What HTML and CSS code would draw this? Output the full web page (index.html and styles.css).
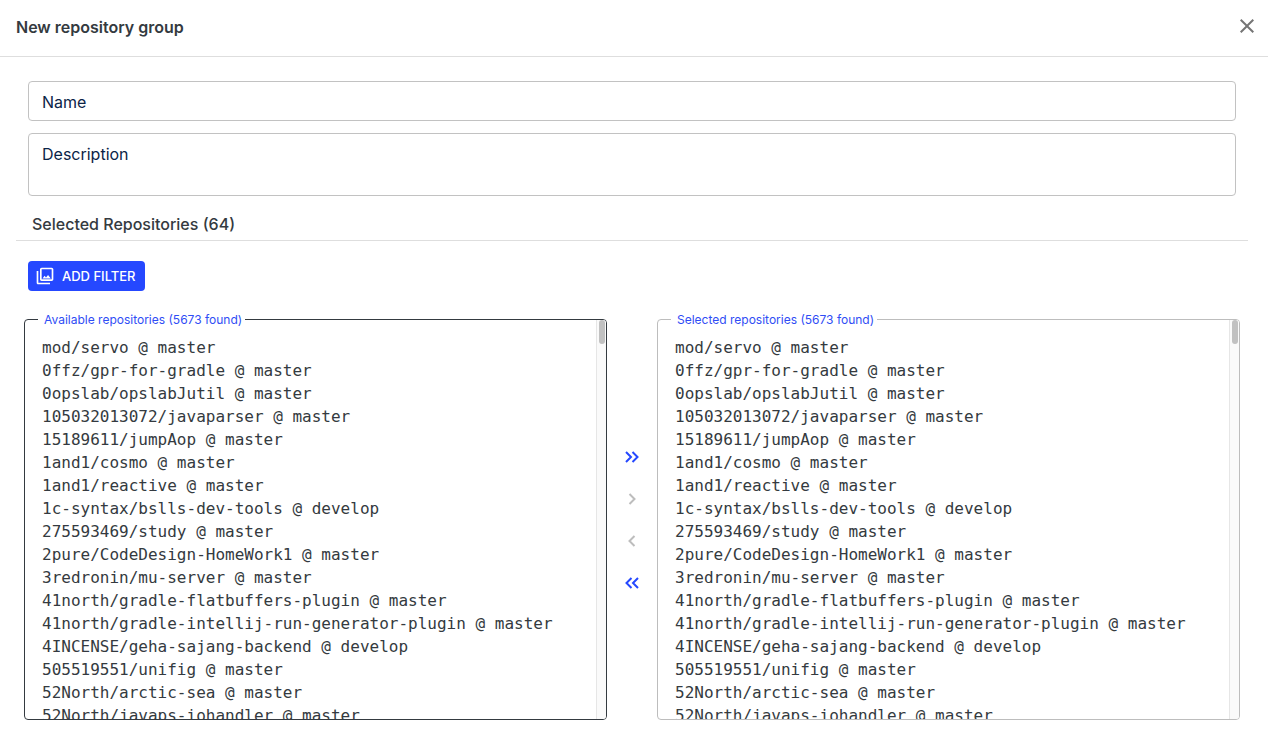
FILE: index.html
```html
<!DOCTYPE html>
<html lang="en">
<head>
<meta charset="utf-8">
<meta name="viewport" content="width=device-width, initial-scale=1">
<title>New repository group</title>
<link rel="stylesheet" href="styles.css">
</head>
<body>
<header class="header">
  <h1 class="title">New repository group</h1>
  <button class="close" type="button" aria-label="Close">
    <svg width="24" height="24" viewBox="0 0 24 24" fill="currentColor"><path d="M19 6.41 17.59 5 12 10.59 6.41 5 5 6.41 10.59 12 5 17.59 6.41 19 12 13.41 17.59 19 19 17.59 13.41 12z"/></svg>
  </button>
</header>
<main>
  <form>
    <div class="fields">
      <div class="field">
        <label class="field-label" for="name">Name</label>
        <input class="field-control" id="name" type="text">
      </div>
      <div class="field">
        <label class="field-label" for="description">Description</label>
        <textarea class="field-control field-control-multiline" id="description" rows="2"></textarea>
      </div>
    </div>
    <h2 class="section-title">Selected Repositories (64)</h2>
    <div class="toolbar">
      <button class="add-filter" type="button">
        <svg width="20" height="20" viewBox="0 0 24 24" fill="currentColor"><path d="M20 4v12H8V4h12m0-2H8c-1.1 0-2 .9-2 2v12c0 1.100.9 2 2 2h12c1.100 0 2-.9 2-2V4c0-1.100-.9-2-2-2zm-8.500 9.670 1.690 2.260 2.480-3.100L19 15H9zM2 6v14c0 1.100.9 2 2 2h14v-2H4V6H2z"/></svg>
        <span>ADD FILTER</span>
      </button>
    </div>
    <div class="transfer">
      <div class="pane pane-active">
        <label class="pane-label" for="available">Available repositories (5673 found)</label>
        <textarea class="pane-list" id="available" rows="16" wrap="off" spellcheck="false" readonly>mod/servo @ master
0ffz/gpr-for-gradle @ master
0opslab/opslabJutil @ master
105032013072/javaparser @ master
15189611/jumpAop @ master
1and1/cosmo @ master
1and1/reactive @ master
1c-syntax/bslls-dev-tools @ develop
275593469/study @ master
2pure/CodeDesign-HomeWork1 @ master
3redronin/mu-server @ master
41north/gradle-flatbuffers-plugin @ master
41north/gradle-intellij-run-generator-plugin @ master
4INCENSE/geha-sajang-backend @ develop
505519551/unifig @ master
52North/arctic-sea @ master
52North/javaps-iohandler @ master</textarea>
        <div class="track"><div class="thumb"></div></div>
      </div>
      <div class="actions">
        <button class="move" type="button" aria-label="Move all right"><svg width="20" height="20" viewBox="0 0 20 20"><path d="m4 5 5 5-5 5M10.500 5l5 5-5 5"/></svg></button>
        <button class="move" type="button" aria-label="Move selected right" disabled><svg width="20" height="20" viewBox="0 0 20 20"><path d="m7.500 5 5 5-5 5"/></svg></button>
        <button class="move" type="button" aria-label="Move selected left" disabled><svg width="20" height="20" viewBox="0 0 20 20"><path d="m12.500 5-5 5 5 5"/></svg></button>
        <button class="move" type="button" aria-label="Move all left"><svg width="20" height="20" viewBox="0 0 20 20"><path d="m9.500 5-5 5 5 5M16 5l-5 5 5 5"/></svg></button>
      </div>
      <div class="pane">
        <label class="pane-label" for="selected">Selected repositories (5673 found)</label>
        <textarea class="pane-list" id="selected" rows="16" wrap="off" spellcheck="false" readonly>mod/servo @ master
0ffz/gpr-for-gradle @ master
0opslab/opslabJutil @ master
105032013072/javaparser @ master
15189611/jumpAop @ master
1and1/cosmo @ master
1and1/reactive @ master
1c-syntax/bslls-dev-tools @ develop
275593469/study @ master
2pure/CodeDesign-HomeWork1 @ master
3redronin/mu-server @ master
41north/gradle-flatbuffers-plugin @ master
41north/gradle-intellij-run-generator-plugin @ master
4INCENSE/geha-sajang-backend @ develop
505519551/unifig @ master
52North/arctic-sea @ master
52North/javaps-iohandler @ master</textarea>
        <div class="track"><div class="thumb"></div></div>
      </div>
    </div>
  </form>
</main>
</body>
</html>
```

FILE: styles.css
```css
* {
  box-sizing: border-box;
}

body {
  margin: 0;
  background: #fff;
  color: #343a40;
  font-family: Inter, "Liberation Sans", sans-serif;
  font-size: 16px;
  line-height: 24px;
}

button,
input,
textarea {
  margin: 0;
  font: inherit;
}

button {
  padding: 0;
  border: 0;
  background: none;
  cursor: pointer;
}

svg {
  display: block;
}

.header {
  display: flex;
  align-items: flex-start;
  justify-content: space-between;
  padding: 14px 9px 16px 16px;
  border-bottom: 1px solid #dedede;
}

.title {
  margin: 0;
  font-size: 16px;
  font-weight: 600;
  line-height: 26px;
}

.close {
  color: #757575;
}

.fields {
  display: flex;
  flex-direction: column;
  gap: 12px;
  padding: 24px 32px 0 28px;
}

.field {
  position: relative;
}

.field-label {
  position: absolute;
  top: 9px;
  left: 14px;
  color: #0b2447;
  pointer-events: none;
}

.field-control {
  display: block;
  width: 100%;
  padding: 7px 13px;
  border: 1px solid #c2c2c2;
  border-radius: 4px;
  background: transparent;
  color: #0b2447;
  resize: none;
}

.field-control-multiline {
  padding-bottom: 6px;
}

.section-title {
  margin: 16px 20px 0 16px;
  padding: 0 16px 4px;
  border-bottom: 1px solid #dedede;
  font-size: 16px;
  font-weight: 500;
}

.toolbar {
  padding: 20px 28px 28px;
}

.add-filter {
  display: flex;
  align-items: center;
  gap: 7px;
  height: 30px;
  padding: 0 9px 0 7px;
  border-radius: 4px;
  background: #2548ff;
  color: #fff;
  font-size: 13px;
  font-weight: 500;
}

.transfer {
  display: grid;
  grid-template-columns: 1fr 50px 1fr;
  padding: 0 28px 24px 24px;
}

.pane {
  position: relative;
  display: flex;
  border: 1px solid #bdbdbd;
  border-radius: 4px;
}

.pane-active {
  border-color: #343a40;
}

.pane-label {
  position: absolute;
  top: -8px;
  left: 13px;
  padding: 0 3px 0 6px;
  background: #fff;
  color: #2f4df5;
  font-size: 12px;
  line-height: 16px;
}

.pane-list {
  flex: 1;
  min-width: 0;
  padding: 16px 17px 15px;
  border: 0;
  outline: 0;
  background: transparent;
  color: #343a40;
  font-family: "DejaVu Sans Mono", monospace;
  font-size: 16px;
  line-height: 23px;
  resize: none;
  overflow: hidden;
}

.track {
  width: 10px;
  padding-left: 1px;
  border-left: 1px solid #e6e6e6;
  border-radius: 0 3px 3px 0;
  background: #fafafa;
}

.thumb {
  width: 6px;
  height: 24px;
  margin-left: 1px;
  border-radius: 3px;
  background: #c1c1c1;
}

.actions {
  display: flex;
  flex-direction: column;
  align-items: center;
  justify-content: center;
}

.move {
  padding: 11px;
  color: #2548ff;
}

.move:disabled {
  color: #bdbdbd;
}

.move path {
  fill: none;
  stroke: currentColor;
  stroke-width: 2;
}
```
